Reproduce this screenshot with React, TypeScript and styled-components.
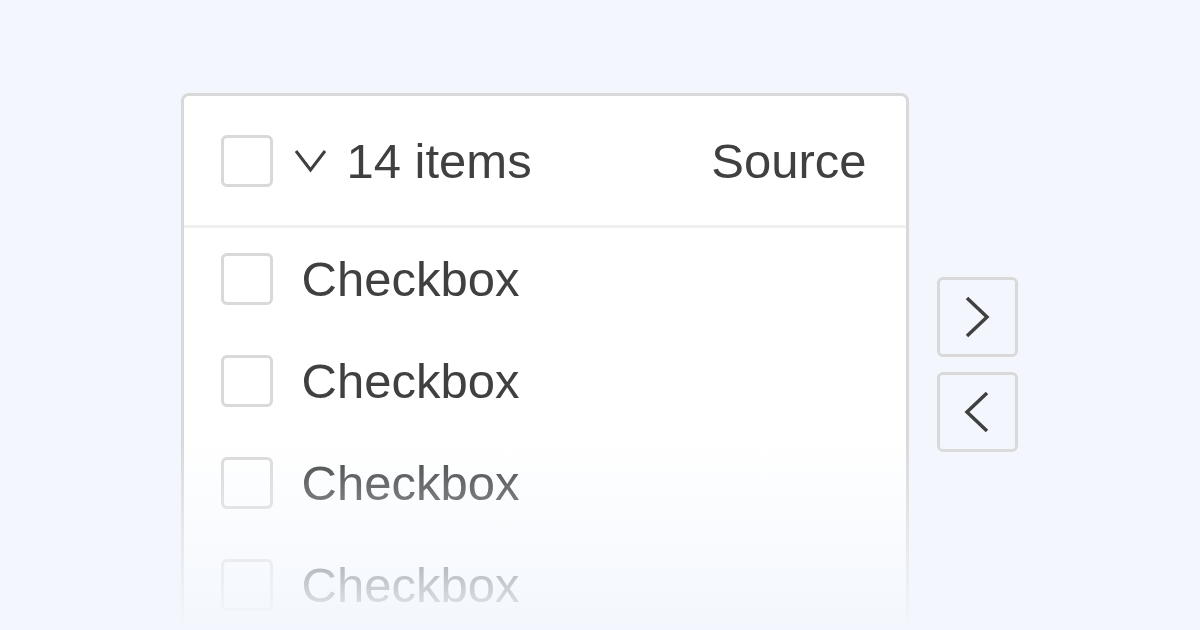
import React from "react";
import styled, { createGlobalStyle } from "styled-components";

const GlobalStyle = createGlobalStyle`
  html, body {
    margin: 0;
    padding: 0;
    background: #f3f7fd;
    font-family: "Liberation Sans", Arial, sans-serif;
    overflow: hidden;
  }
`;

const Page = styled.div`
  position: relative;
  width: 1200px;
  height: 630px;
  overflow: hidden;
  display: flex;
  justify-content: center;
  align-items: flex-start;
  padding-top: 93px;
  padding-right: 2px;
  box-sizing: border-box;
  gap: 28px;
`;

const Panel = styled.div`
  width: 728px;
  height: 600px;
  box-sizing: border-box;
  background: #fff;
  border: 3px solid #d9d9d9;
  border-radius: 8px;
  display: flex;
  flex-direction: column;
`;

const Header = styled.div`
  height: 132px;
  box-sizing: border-box;
  display: flex;
  align-items: center;
  padding: 0 39px 0 37px;
  border-bottom: 3px solid #f0f0f0;
  color: #404040;
  font-size: 49px;
`;

const Box = styled.span`
  width: 52px;
  height: 52px;
  box-sizing: border-box;
  border: 3px solid #d9d9d9;
  border-radius: 6px;
  background: #fff;
  flex: none;
`;

const Caret = styled.svg`
  margin: 0 19px 0 20px;
  flex: none;
`;

const Count = styled.span`
  flex: 1;
`;

const List = styled.div`
  display: flex;
  flex-direction: column;
`;

const Row = styled.div`
  height: 102px;
  display: flex;
  align-items: center;
  padding-left: 37px;
  gap: 29px;
  font-size: 49px;
  color: #404040;
`;

const Actions = styled.div`
  display: flex;
  flex-direction: column;
  gap: 15px;
  margin-top: 184px;
`;

const ArrowButton = styled.button`
  width: 81px;
  height: 80px;
  box-sizing: border-box;
  border: 3px solid #d9d9d9;
  border-radius: 6px;
  background: #f3f7fd;
  display: flex;
  align-items: center;
  justify-content: center;
  padding: 0;
`;

const Fade = styled.div`
  position: absolute;
  left: 0;
  right: 0;
  bottom: 0;
  height: 190px;
  background: linear-gradient(
    to bottom,
    rgba(243, 247, 253, 0) 0%,
    rgba(243, 247, 253, 1) 100%
  );
  pointer-events: none;
`;

const items = ["Checkbox", "Checkbox", "Checkbox", "Checkbox"];

const App: React.FC = () => {
  return (
    <>
      <GlobalStyle />
      <Page>
        <Panel>
          <Header>
            <Box />
            <Caret width="35" height="26" viewBox="0 0 35 26">
              <path d="M3 3 L17.5 22 L32 3" fill="none" stroke="#404040" strokeWidth="3" />
            </Caret>
            <Count>14 items</Count>
            <span>Source</span>
          </Header>
          <List>
            {items.map((label, i) => (
              <Row key={i}>
                <Box />
                <span>{label}</span>
              </Row>
            ))}
          </List>
        </Panel>
        <Actions>
          <ArrowButton>
            <svg width="30" height="44" viewBox="0 0 30 44">
              <path d="M5 3 L25 22 L5 41" fill="none" stroke="#404040" strokeWidth="3.5" />
            </svg>
          </ArrowButton>
          <ArrowButton>
            <svg width="30" height="44" viewBox="0 0 30 44">
              <path d="M25 3 L5 22 L25 41" fill="none" stroke="#404040" strokeWidth="3.5" />
            </svg>
          </ArrowButton>
        </Actions>
        <Fade />
      </Page>
    </>
  );
};

export default App;
